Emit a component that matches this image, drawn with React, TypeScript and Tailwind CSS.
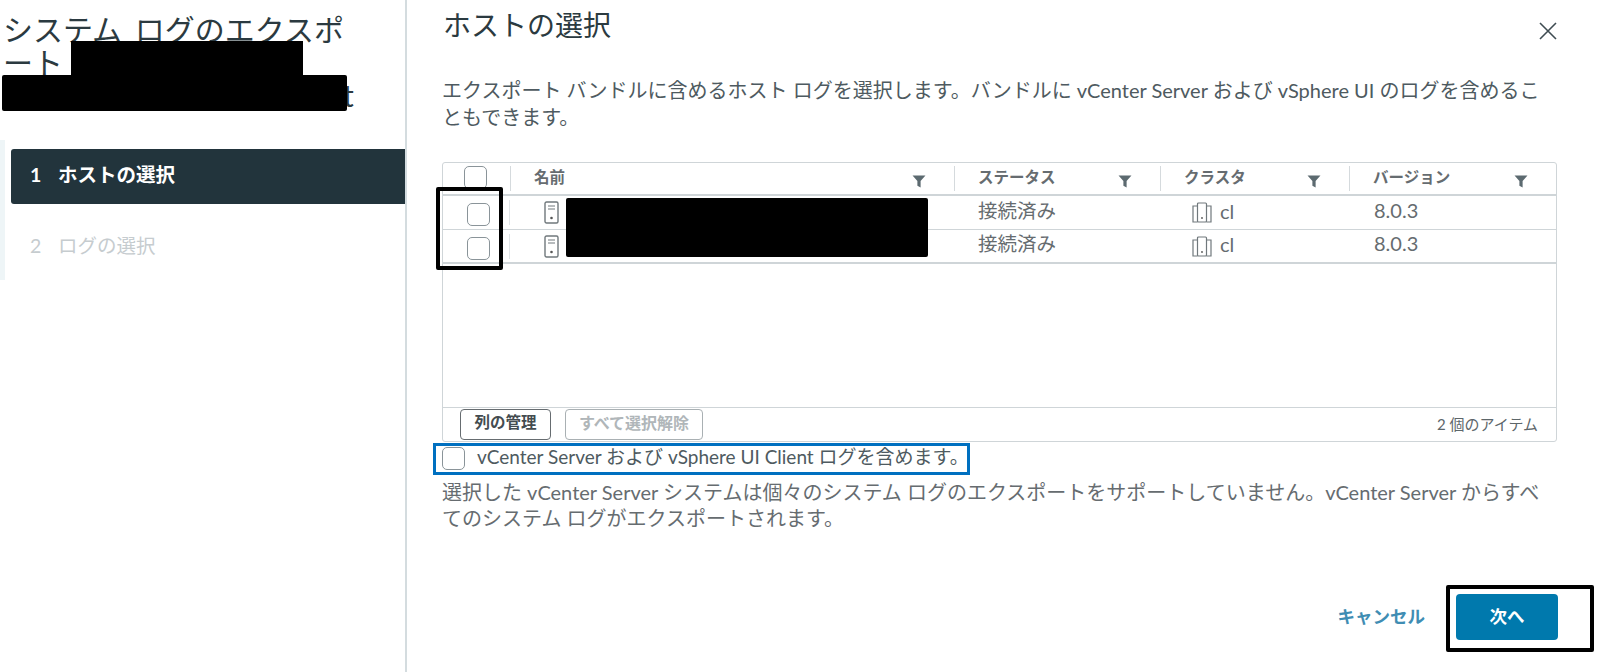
const font = { fontFamily: 'Lato, "Noto Sans CJK JP", sans-serif' };

const gridCols = "grid grid-cols-[67px_444px_206px_189px_207px]";

function Checkbox({ className = "" }: { className?: string }) {
  return <span className={`block h-[23px] w-[23px] rounded-[5px] border border-[#8a9499] bg-white ${className}`} />;
}

function FilterIcon() {
  return (
    <svg width="14" height="13" viewBox="0 0 13 12" className="shrink-0 text-[#5c6a70]">
      <path d="M0.5 0.5h12L8 5.5V11.5L5 10V5.5Z" fill="currentColor" />
    </svg>
  );
}

function ServerIcon() {
  return (
    <svg width="15" height="23" viewBox="0 0 15 23" fill="none" stroke="#70787c" strokeWidth="1.4">
      <rect x="1" y="1" width="13" height="21" rx="1.5" />
      <path d="M4 5h7M4 8h7" strokeWidth="1" />
      <circle cx="7.5" cy="17" r="1.3" fill="#555" stroke="none" />
    </svg>
  );
}

function ClusterIcon() {
  return (
    <svg width="22" height="21" viewBox="0 0 22 21" fill="none" stroke="#70787c" strokeWidth="1.2">
      <rect x="6.5" y="1" width="9" height="19" rx="1" />
      <path d="M6.5 4H2v16h4.5M15.5 4H20v16h-4.5" />
      <circle cx="11" cy="16" r="0.9" fill="#555" stroke="none" />
    </svg>
  );
}

function HeaderCell({ title }: { title: string }) {
  return (
    <div className="flex h-full items-center">
      <span className="h-[25px] w-px bg-[#d5dadd]" />
      <span className="flex flex-1 items-center justify-between pl-[23px] pr-[28px]">
        <span className="-mt-[2px] text-[15.5px] font-bold text-[#666c70]">{title}</span>
        <span className="mt-[6px]"><FilterIcon /></span>
      </span>
    </div>
  );
}

function HostRow({ last }: { last?: boolean }) {
  return (
    <div className={`${gridCols} h-[34px] text-[#666c70] ${last ? "border-b-2 border-[#cfd5d8]" : "border-b border-[#cfd5d8]"}`}>
      <div className="flex items-center">
        <span className="flex flex-1 justify-center pt-[4px] pl-[4px]"><Checkbox /></span>
        <span className="h-[25px] w-px bg-[#e0e4e6]" />
      </div>
      <div className="flex items-center pl-[34px]"><ServerIcon /></div>
      <div className="-mt-1 flex items-center pl-[24px] text-[19.5px]">接続済み</div>
      <div className="flex items-center gap-[7px] pl-[31px] text-[20px]">
        <ClusterIcon />
        <span className="-mt-1">cl</span>
      </div>
      <div className="-mt-[6px] flex items-center pl-[25px] text-[20px]">8.0.3</div>
    </div>
  );
}

export default function App() {
  return (
    <div className="relative flex h-[672px] w-[1604px] overflow-hidden bg-white" style={font}>
      <aside className="w-[407px] shrink-0 border-r-2 border-[#d4dcdf]">
        <h1 className="pt-[13px] pl-[3px] text-[30px] leading-[33px] text-[#2b3a40] [word-spacing:5px]">
          <span className="block">システム ログのエクスポ</span>
          <span className="block">ート</span>
          <span className="block pl-[340px]">t</span>
        </h1>
        <div className="mt-[28px] flex h-[140px] flex-col border-l-[5px] border-[#eef5f7] pt-[9px] pl-[6px] text-[19.5px]">
          <div className="flex h-[55px] items-center rounded-l-[3px] bg-[#22343c] pb-[3px] pl-[19px] font-bold text-white">
            <span className="w-[28px]">1</span>
            <span>ホストの選択</span>
          </div>
          <div className="mt-[15px] flex h-[55px] items-center pb-[2px] pl-[19px] text-[#c6cccf]">
            <span className="w-[28px]">2</span>
            <span>ログの選択</span>
          </div>
        </div>
      </aside>

      <main className="flex min-w-0 flex-1 flex-col pl-[35px] pr-[47px]">
        <div className="flex items-start justify-between">
          <h2 className="pt-[5px] pl-[1px] text-[28px] leading-[40px] text-[#2b3a40]">ホストの選択</h2>
          <svg width="18" height="18" viewBox="0 0 18 18" className="mt-[22px]" stroke="#3f4c52" strokeWidth="1.6">
            <path d="M1 1l16 16M17 1L1 17" />
          </svg>
        </div>

        <p className="mt-[32px] w-[1115px] text-[20px] leading-[26.5px] text-[#4e5a60]">
          エクスポート バンドルに含めるホスト ログを選択します。バンドルに vCenter Server および vSphere UI のログを含めることもできます。
        </p>

        <div className="mt-[32px] flex h-[280px] w-[1115px] flex-col rounded-[3px] border border-[#cfd5d8]">
          <div className={`${gridCols} h-[33px] border-b-2 border-[#cfd5d8]`}>
            <div className="flex items-center justify-center pb-[3px] pr-[3px]"><Checkbox /></div>
            <HeaderCell title="名前" />
            <HeaderCell title="ステータス" />
            <HeaderCell title="クラスタ" />
            <HeaderCell title="バージョン" />
          </div>
          <HostRow />
          <HostRow last />
          <div className="flex-1" />
          <div className="flex h-[34px] items-center justify-between border-t border-[#cfd5d8] pr-[18px] pl-[17px]">
            <div className="flex gap-[14px]">
              <button className="h-[31px] w-[91px] rounded-[4px] border border-[#666c70] pb-[3px] text-[15.5px] font-bold text-[#444c50]">列の管理</button>
              <button className="h-[31px] w-[138px] rounded-[4px] border border-[#a9b0b3] pb-[3px] text-[16px] font-bold text-[#b0b6b9]">すべて選択解除</button>
            </div>
            <span className="text-[15px] text-[#5d666a]">2 個のアイテム</span>
          </div>
        </div>

        <label className="mt-[5px] flex h-[23px] items-center gap-[12px] text-[19px] text-[#4e5a60]">
          <Checkbox />
          <span className="-mt-[3px]">vCenter Server および vSphere UI Client ログを含めます。</span>
        </label>

        <p className="mt-[9px] w-[1112px] text-[20px] leading-[26px] text-[#666c70]">
          選択した vCenter Server システムは個々のシステム ログのエクスポートをサポートしていません。vCenter Server からすべてのシステム ログがエクスポートされます。
        </p>

        <div className="mt-auto mb-[32px] flex items-center justify-end gap-[31px] mr-[-1px]">
          <button className="text-[17.5px] font-bold text-[#3f8db3]">キャンセル</button>
          <button className="h-[46px] w-[102px] rounded-[4px] bg-[#0079ad] text-[17.5px] font-bold text-white">次へ</button>
        </div>
      </main>

      {/* redactions and annotation frames sit over the screenshot */}
      <div className="absolute top-[41px] left-[71px] h-[34px] w-[232px] bg-black" />
      <div className="absolute top-[75px] left-[2px] h-[36px] w-[345px] rounded-[2px] bg-black" />
      <div className="absolute top-[198px] left-[566px] h-[59px] w-[362px] rounded-[2px] bg-black" />
      <div className="absolute top-[187px] left-[436px] h-[83px] w-[67px] rounded-[2px] border-4 border-black" />
      <div className="absolute top-[443px] left-[433px] h-[32px] w-[537px] border-[3px] border-[#0070c0]" />
      <div className="absolute top-[585px] left-[1446px] h-[67px] w-[148px] rounded-[2px] border-4 border-black" />
    </div>
  );
}
